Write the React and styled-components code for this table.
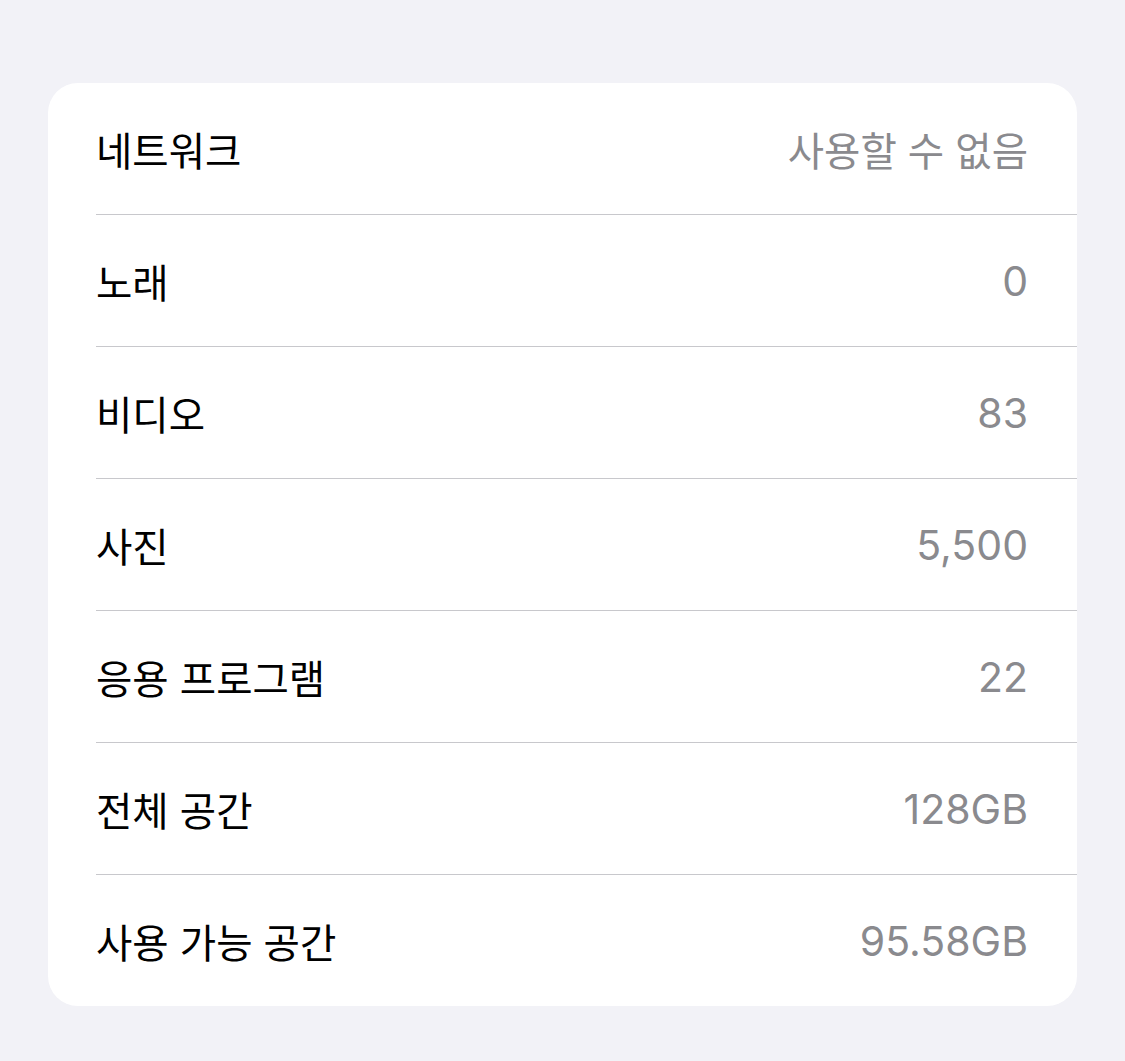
import React from 'react';
import styled, { createGlobalStyle } from 'styled-components';

const GlobalStyle = createGlobalStyle`
  html, body {
    margin: 0;
    padding: 0;
    background: #f2f2f7;
  }
  body {
    font-family: "Inter", "Noto Sans CJK KR", sans-serif;
    -webkit-font-smoothing: antialiased;
  }
`;

const Page = styled.div`
  width: 1125px;
  height: 1061px;
  box-sizing: border-box;
  padding: 83px 48px 0 48px;
  background: #f2f2f7;
`;

const Card = styled.div`
  background: #ffffff;
  border-radius: 30px;
  padding-left: 48px;
  overflow: hidden;
`;

const Row = styled.div`
  display: flex;
  align-items: center;
  justify-content: space-between;
  height: 131px;
  padding-right: 49px;
  border-bottom: ${(p) => (p.$last ? 'none' : '1px solid #c8c8cc')};
`;

const Label = styled.span`
  font-size: 39.5px;
  color: #000000;
`;

const Value = styled.span`
  font-size: ${(p) => (p.$numeric ? '41px' : '39.5px')};
  color: #8a8a8e;
`;

const rows = [
  ['네트워크', '사용할 수 없음'],
  ['노래', '0'],
  ['비디오', '83'],
  ['사진', '5,500'],
  ['응용 프로그램', '22'],
  ['전체 공간', '128GB'],
  ['사용 가능 공간', '95.58GB'],
];

const App = () => {
  return (
    <Page>
      <GlobalStyle />
      <Card>
        {rows.map(([label, value], i) => (
          <Row key={label} $last={i === rows.length - 1}>
            <Label>{label}</Label>
            <Value $numeric={/^[0-9]/.test(value)}>{value}</Value>
          </Row>
        ))}
      </Card>
    </Page>
  );
};

export default App;
